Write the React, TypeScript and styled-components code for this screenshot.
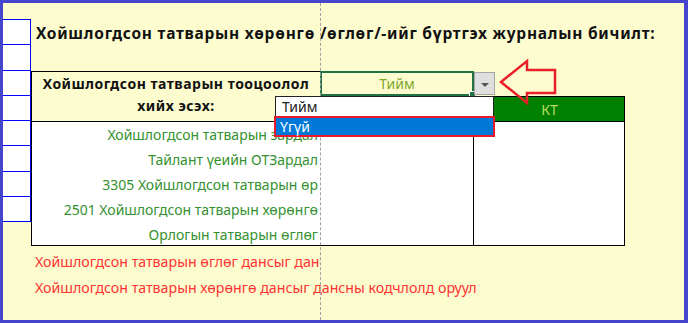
import styled, { createGlobalStyle } from 'styled-components'

const GlobalStyle = createGlobalStyle`
    html, body {
        margin: 0;
        padding: 0;
    }
    body {
        font-family: 'Noto Sans', 'Open Sans', sans-serif;
    }
`

interface NoteProps {
    clip?: boolean
}

const Frame = styled.div`
    position: relative;
    box-sizing: border-box;
    width: 688px;
    height: 323px;
    display: flex;
    align-items: flex-start;
    overflow: hidden;
    background: #fdfccf;
    border: 3px solid #4646cc;
    border-right-width: 4px;
`

const PageBreak = styled.div`
    position: absolute;
    left: 317px;
    top: 0;
    bottom: 0;
    border-left: 1px dashed #a0a0a0;
`

const LeftColumn = styled.div`
    width: 28px;
    height: 203px;
    margin-top: 16px;
    display: grid;
    grid-template-rows: repeat(8, 1fr);
    border-bottom: 1px solid #0000ff;
    box-sizing: border-box;
`

const SideBox = styled.div`
    background: #fff;
    border-top: 1px solid #0000ff;
    border-right: 1px solid #0000ff;
`

const Main = styled.div`
    flex: 1;
    display: flex;
    flex-direction: column;
`

const Title = styled.h1`
    margin: 0;
    height: 68px;
    box-sizing: border-box;
    padding: 18px 0 0 5px;
    font-size: 15.5px;
    letter-spacing: 0.75px;
    line-height: 24px;
    font-weight: 700;
    color: #111;
    white-space: nowrap;
`

const Sheet = styled.div`
    display: grid;
    grid-template-columns: 289px 154px 151px;
    grid-template-rows: 25px 25px 125px;
`

const Question = styled.div`
    grid-row: 1 / 3;
    grid-column: 1;
    border-top: 1px solid #000;
    border-left: 1px solid #000;
    display: flex;
    flex-direction: column;
    align-items: center;
    justify-content: center;
    padding-bottom: 3px;
    font-size: 14px;
    letter-spacing: 0.5px;
    line-height: 22px;
    font-weight: 700;
    color: #111;
    white-space: nowrap;
`

const Choice = styled.div`
    position: relative;
    grid-row: 1;
    grid-column: 2;
    box-sizing: border-box;
    border: 2px solid #217346;
    display: flex;
    align-items: center;
    justify-content: center;
    font-size: 14px;
    color: #7ea62a;
`

const FillHandle = styled.span`
    position: absolute;
    right: -4px;
    bottom: -4px;
    width: 5px;
    height: 5px;
    background: #217346;
    border: 1px solid #fff;
`

const DropButton = styled.div`
    position: absolute;
    left: 152px;
    top: -1px;
    box-sizing: border-box;
    width: 21px;
    height: 23px;
    background: #dfdfdf;
    border: 1px solid #a6a6a6;
    display: flex;
    align-items: center;
    justify-content: center;
    &::after {
        content: '';
        border-left: 4px solid transparent;
        border-right: 4px solid transparent;
        border-top: 4px solid #555;
        margin-top: 2px;
    }
`

const Pointer = styled.svg`
    position: absolute;
    left: 176px;
    top: -16px;
`

const OptionList = styled.ul`
    position: absolute;
    left: -47px;
    top: 23px;
    z-index: 2;
    width: 219px;
    margin: 0;
    padding: 0;
    list-style: none;
    box-sizing: border-box;
    background: #fff;
    border: 1px solid #222;
`

const Option = styled.li<{ selected?: boolean }>`
    box-sizing: border-box;
    height: ${(props) => props.selected ? '21px' : '19px'};
    padding-left: ${(props) => props.selected ? '4px' : '6px'};
    font-size: 14px;
    line-height: ${(props) => props.selected ? '17px' : '19px'};
    text-align: left;
    color: ${(props) => props.selected ? '#fff' : '#222'};
    background: ${(props) => props.selected ? '#0078d7' : '#fff'};
    border: ${(props) => props.selected ? '2px solid #e8192c' : 'none'};
    margin: ${(props) => props.selected ? '0 -2px -1px' : '0'};
`

const Header = styled.div`
    grid-row: 2;
    grid-column: 3;
    background: #008000;
    border: 1px solid #000;
    border-bottom: none;
    display: flex;
    align-items: center;
    justify-content: center;
    font-size: 14px;
    color: #b8dc62;
`

const Body = styled.div`
    grid-row: 3;
    grid-column: 1 / 3;
    background: #fff;
    border: 1px solid #000;
    display: grid;
    grid-template-columns: 286px;
    grid-auto-rows: 25px;
`

const Account = styled.div`
    display: flex;
    align-items: center;
    justify-content: flex-end;
    font-size: 14px;
    color: #34912f;
    white-space: nowrap;
`

const Credit = styled.div`
    grid-row: 3;
    grid-column: 3;
    background: #fff;
    border: 1px solid #000;
    border-left: none;
`

const Notes = styled.div`
    padding-top: 3px;
    display: flex;
    flex-direction: column;
`

const Note = styled.div<NoteProps>`
    width: ${(props) => props.clip ? '289px' : 'auto'};
    height: 26px;
    padding-left: 4px;
    box-sizing: border-box;
    overflow: hidden;
    white-space: nowrap;
    font-size: 14.2px;
    line-height: 26px;
    color: #ff3333;
`

const accounts = [
    'Хойшлогдсон татварын зардал',
    'Тайлант үеийн ОТЗардал',
    '3305 Хойшлогдсон татварын өр',
    '2501 Хойшлогдсон татварын хөрөнгө',
    'Орлогын татварын өглөг',
]

export default function App() {
    return (
        <>
            <GlobalStyle />
            <Frame>
                <LeftColumn>
                    {Array.from({ length: 8 }).map((_, i) => <SideBox key={i} />)}
                </LeftColumn>
                <Main>
                    <Title>Хойшлогдсон татварын хөрөнгө /өглөг/-ийг бүртгэх журналын бичилт:</Title>
                    <Sheet>
                        <Question>
                            <span>Хойшлогдсон татварын тооцоолол</span>
                            <span>хийх эсэх:</span>
                        </Question>
                        <Choice>
                            Тийм
                            <FillHandle />
                            <DropButton />
                            <Pointer width='60' height='50' viewBox='0 0 60 50'>
                                <path
                                    d='M3 25 L29 4 L29 13 L57 13 L57 36 L29 36 L29 46 Z'
                                    fill='none'
                                    stroke='#e8202a'
                                    strokeWidth='2.5'
                                    strokeLinejoin='miter'
                                />
                            </Pointer>
                            <OptionList>
                                <Option>Тийм</Option>
                                <Option selected>Үгүй</Option>
                            </OptionList>
                        </Choice>
                        <Header>КТ</Header>
                        <Body>
                            {accounts.map((a) => <Account key={a}>{a}</Account>)}
                        </Body>
                        <Credit />
                    </Sheet>
                    <Notes>
                        <Note clip>Хойшлогдсон татварын өглөг дансыг дансны кодчлолд оруул</Note>
                        <Note>Хойшлогдсон татварын хөрөнгө дансыг дансны кодчлолд оруул</Note>
                    </Notes>
                </Main>
                <PageBreak />
            </Frame>
        </>
    )
}
